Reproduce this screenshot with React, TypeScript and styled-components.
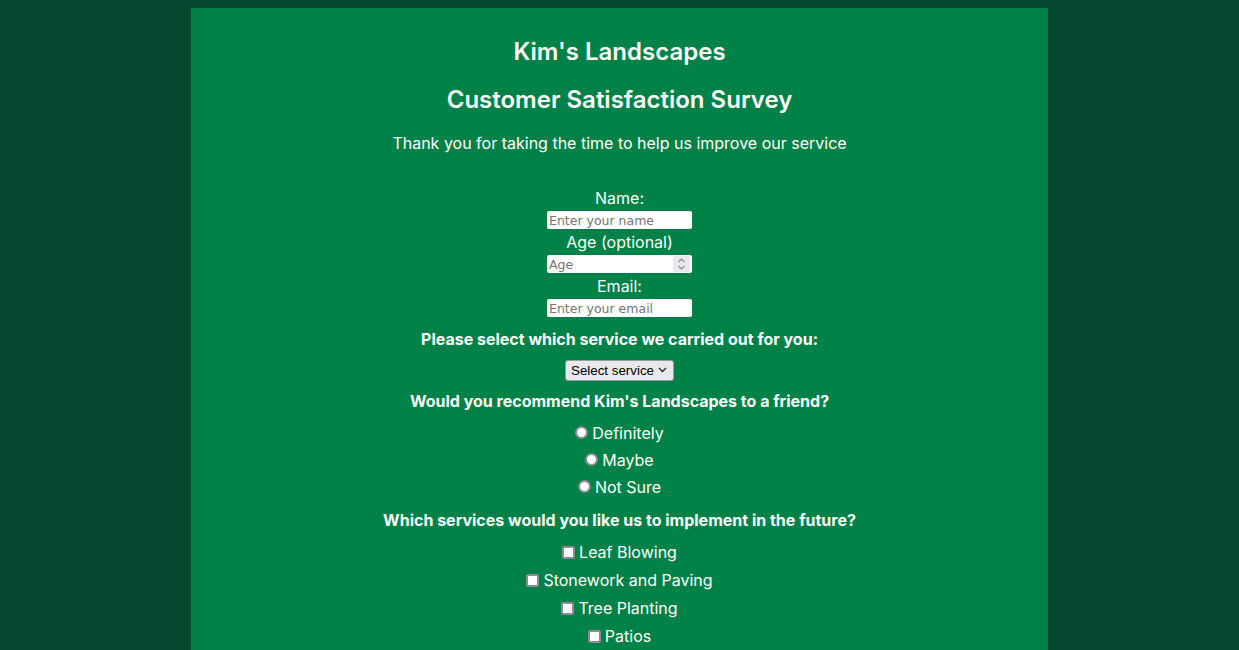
import React from "react";
import styled, { createGlobalStyle } from "styled-components";

const GlobalStyle = createGlobalStyle`
  html, body {
    background: #04482f;
  }
  body {
    margin: 8px;
    font-family: Inter, Roboto, "Liberation Sans", sans-serif;
    color: #ffffff;
  }
`;

const Card = styled.main`
  width: 70%;
  margin: 0 auto;
  background: #008148;
  display: flex;
  flex-direction: column;
  align-items: center;
  text-align: center;
  padding: 0 0 60px;
`;

const Title = styled.h1<{ $top: number }>`
  margin: ${(p) => p.$top}px 0 0;
  font-size: 24px;
  line-height: 30px;
  font-weight: 600;
`;

const Intro = styled.p`
  margin: 18px 0 0;
  font-size: 16px;
  line-height: 20px;
`;

const Form = styled.form`
  display: flex;
  flex-direction: column;
  align-items: center;
  margin-top: 35px;
`;

const FieldLabel = styled.label`
  display: block;
  font-size: 16px;
  line-height: 20px;
`;

const InputWrap = styled.div`
  position: relative;
  display: flex;
  margin: 3px 0;
`;

const TextInput = styled.input`
  box-sizing: border-box;
  width: 145px;
  height: 18px;
  margin: 0;
  padding: 0 0 0 2px;
  border: none;
  border-radius: 2px;
  background: #ffffff;
  font: 12.5px "DejaVu Sans", sans-serif;
  color: #000;
  appearance: textfield;
  &::placeholder {
    color: #757575;
  }
  &::-webkit-inner-spin-button,
  &::-webkit-outer-spin-button {
    -webkit-appearance: none;
    margin: 0;
  }
`;

const Spinner = styled.svg`
  position: absolute;
  right: 2px;
  top: 1px;
  width: 17px;
  height: 16px;
  pointer-events: none;
`;

const Question = styled.p<{ $top: number }>`
  margin: ${(p) => p.$top}px 0 0;
  font-size: 16px;
  line-height: 20px;
  font-weight: 700;
`;

const SelectWrap = styled.div`
  position: relative;
  margin-top: 11px;
  display: flex;
`;

const ServiceSelect = styled.select`
  appearance: none;
  box-sizing: border-box;
  width: 109px;
  height: 21px;
  padding: 0 0 0 5px;
  background: #e9e9ed;
  border: 1px solid #9a9aa3;
  border-radius: 3px;
  color: #000;
  font: 13.33px "Liberation Sans", Arial, sans-serif;
`;

const Chevron = styled.svg`
  position: absolute;
  right: 7px;
  top: 7px;
  width: 9px;
  height: 6px;
  pointer-events: none;
`;

const OptionList = styled.div<{ $row: number }>`
  display: flex;
  flex-direction: column;
  align-items: center;
  margin-top: 8px;
  & > label {
    height: ${(p) => p.$row}px;
  }
`;

const OptionRow = styled.label`
  display: flex;
  align-items: center;
  justify-content: center;
  gap: 4px;
  font-size: 16px;
  line-height: 20px;
`;

const Tick = styled.input<{ $round?: boolean }>`
  appearance: none;
  box-sizing: border-box;
  margin: 0;
  width: 13px;
  height: 13px;
  background: #ffffff;
  border: 2px solid #8b8b95;
  border-radius: ${(p) => (p.$round ? "50%" : "2px")};
`;

const Comments = styled.textarea`
  margin-top: 12px;
  width: 300px;
  height: 120px;
  font: 13.33px "DejaVu Sans", sans-serif;
  border: none;
  border-radius: 2px;
`;

const SubmitButton = styled.button`
  margin-top: 20px;
  padding: 6px 18px;
  font: 16px Inter, sans-serif;
  background: #ffffff;
  color: #008148;
  border: none;
  border-radius: 4px;
`;

export default function App() {
  return (
    <>
      <GlobalStyle />
      <Card>
        <Title $top={29}>Kim's Landscapes</Title>
        <Title $top={18}>Customer Satisfaction Survey</Title>
        <Intro>Thank you for taking the time to help us improve our service</Intro>
        <Form onSubmit={(e) => e.preventDefault()}>
          <FieldLabel htmlFor="name">Name:</FieldLabel>
          <InputWrap>
            <TextInput id="name" type="text" placeholder="Enter your name" />
          </InputWrap>
          <FieldLabel htmlFor="age">Age (optional)</FieldLabel>
          <InputWrap>
            <TextInput id="age" type="number" placeholder="Age" />
            <Spinner viewBox="0 0 17 16">
              <rect x="0" y="0" width="17" height="16" rx="2" fill="#e9e9ed" />
              <path d="M5.5 6 L8.5 3 L11.5 6" fill="none" stroke="#8e8e96" strokeWidth="1.2" />
              <path d="M5.5 10 L8.5 13 L11.5 10" fill="none" stroke="#8e8e96" strokeWidth="1.2" />
            </Spinner>
          </InputWrap>
          <FieldLabel htmlFor="email">Email:</FieldLabel>
          <InputWrap>
            <TextInput id="email" type="email" placeholder="Enter your email" />
          </InputWrap>

          <Question $top={9}>Please select which service we carried out for you:</Question>
          <SelectWrap>
            <ServiceSelect defaultValue="">
              <option value="" disabled>
                Select service
              </option>
              <option>Lawn Mowing</option>
              <option>Hedge Trimming</option>
              <option>Garden Design</option>
            </ServiceSelect>
            <Chevron viewBox="0 0 9 6">
              <path d="M1 1 L4.5 4.5 L8 1" fill="none" stroke="#222" strokeWidth="1.3" />
            </Chevron>
          </SelectWrap>

          <Question $top={10}>Would you recommend Kim's Landscapes to a friend?</Question>
          <OptionList $row={27}>
            <OptionRow>
              <Tick type="radio" name="recommend" $round />
              Definitely
            </OptionRow>
            <OptionRow>
              <Tick type="radio" name="recommend" $round />
              Maybe
            </OptionRow>
            <OptionRow>
              <Tick type="radio" name="recommend" $round />
              Not Sure
            </OptionRow>
          </OptionList>

          <Question $top={10}>Which services would you like us to implement in the future?</Question>
          <OptionList $row={28}>
            <OptionRow>
              <Tick type="checkbox" />
              Leaf Blowing
            </OptionRow>
            <OptionRow>
              <Tick type="checkbox" />
              Stonework and Paving
            </OptionRow>
            <OptionRow>
              <Tick type="checkbox" />
              Tree Planting
            </OptionRow>
            <OptionRow>
              <Tick type="checkbox" />
              Patios
            </OptionRow>
          </OptionList>

          <Question $top={14}>Any other comments or suggestions?</Question>
          <Comments placeholder="Enter your comments here..." />
          <SubmitButton type="submit">Submit</SubmitButton>
        </Form>
      </Card>
    </>
  );
}
